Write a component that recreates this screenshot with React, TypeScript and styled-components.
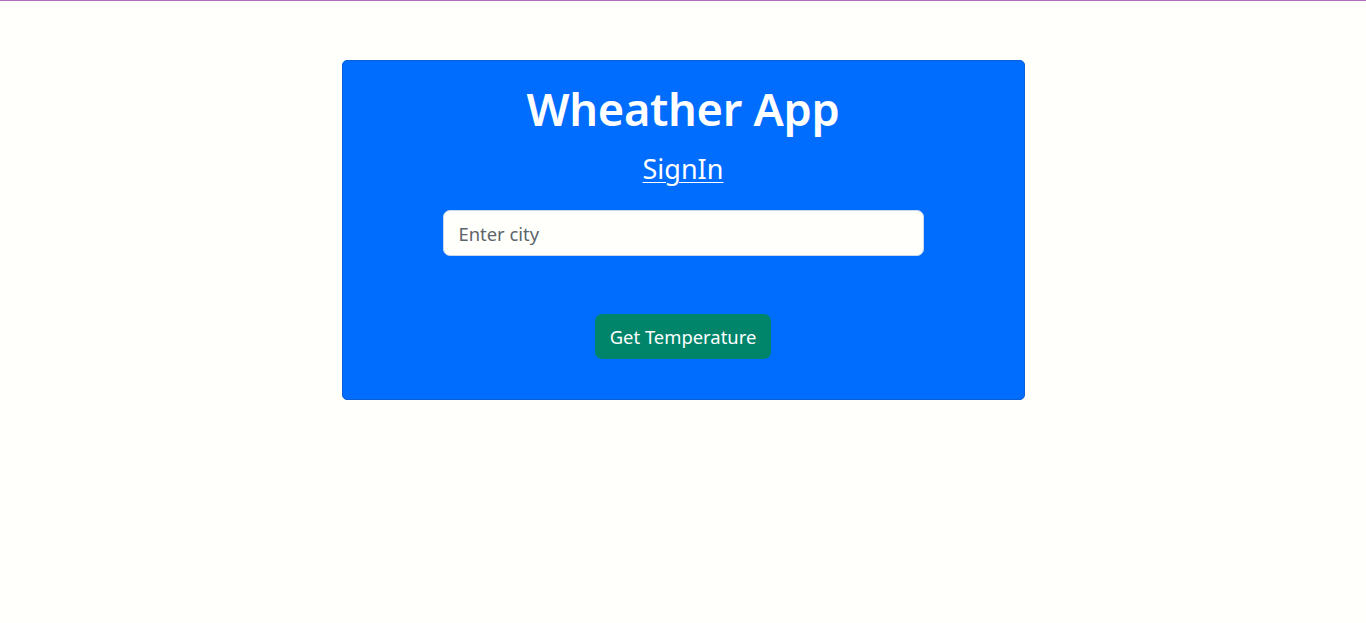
import React from "react";
import styled, { createGlobalStyle } from "styled-components";

const Global = createGlobalStyle`
  html, body { margin: 0; padding: 0; background: #fffffc; }
  body { font-family: "Noto Sans", "Open Sans", sans-serif; }
  * { box-sizing: border-box; }
`;

const Page = styled.div`
  min-height: 623px;
  border-top: 1px solid #b46cbc;
  display: flex;
  flex-direction: column;
  align-items: center;
  padding-top: 59px;
`;

const Card = styled.div`
  width: 683px;
  height: 340px;
  background: #006dfe;
  border: 1px solid #0a5fd6;
  border-radius: 5px;
  display: flex;
  flex-direction: column;
  align-items: center;
  padding-top: 20px;
  color: #fff;
`;

const Title = styled.h1`
  margin: 0;
  font-size: 45.2px;
  font-weight: 600;
  line-height: 56px;
  letter-spacing: -0.3px;
`;

const SignLink = styled.a`
  margin-top: 14px;
  font-size: 27px;
  line-height: 36px;
  color: #fff;
  text-decoration: underline;
  text-underline-offset: 3px;
  text-decoration-thickness: 1px;
  cursor: pointer;
`;

const Input = styled.input`
  margin-top: 23px;
  width: 481px;
  height: 46px;
  border: 1px solid #c9d8ee;
  border-radius: 7px;
  background: #fffffc;
  padding: 0 15px;
  font-family: inherit;
  font-size: 18.4px;
  color: #333;
  outline: none;
  &::placeholder { color: #5d646b; }
`;

const Button = styled.button`
  margin-top: 58px;
  height: 45px;
  padding: 0 15px;
  border: none;
  border-radius: 7px;
  background: #00856a;
  color: #fff;
  font-family: inherit;
  font-size: 18.4px;
  cursor: pointer;
`;

export default function App() {
  return (
    <>
      <Global />
      <Page>
        <Card>
          <Title>Wheather App</Title>
          <SignLink>SignIn</SignLink>
          <Input placeholder="Enter city" />
          <Button>Get Temperature</Button>
        </Card>
      </Page>
    </>
  );
}
